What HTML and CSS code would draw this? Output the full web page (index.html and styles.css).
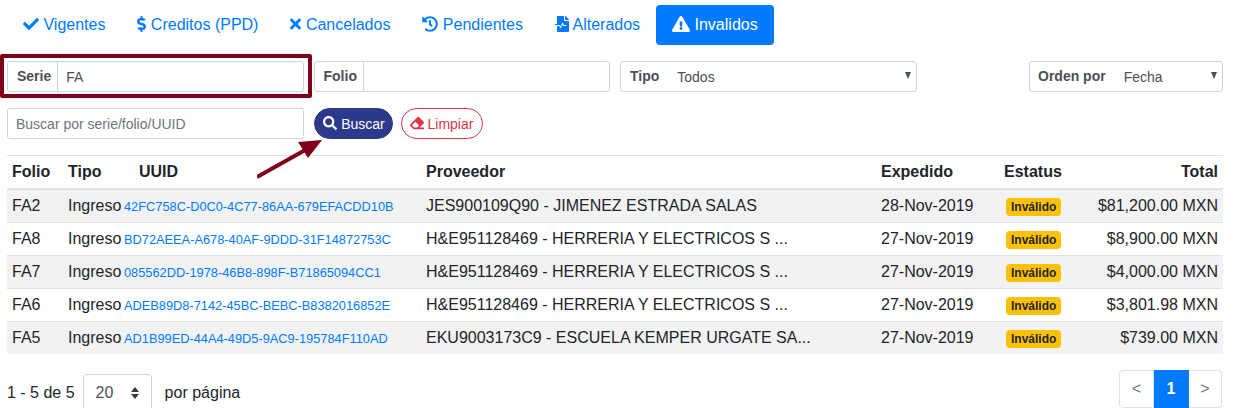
FILE: index.html
```html
<!DOCTYPE html>
<html lang="es">
<head>
 <meta charset="utf-8">
 <title>Invalidos</title>
 <link rel="stylesheet" href="styles.css">
</head>
<body>
<div class="page">
 <ul class="tabs">
  <li><a class="tab" href="#"><svg class="ico" viewBox="0 0 512 512"><path d="M173.898 439.404l-166.4-166.4c-9.997-9.997-9.997-26.206 0-36.204l36.203-36.204c9.997-9.998 26.207-9.998 36.204 0L192 312.69 432.095 72.596c9.997-9.997 26.207-9.997 36.204 0l36.203 36.204c9.997 9.997 9.997 26.206 0 36.204l-294.4 294.401c-9.998 9.997-26.207 9.997-36.204-.001z"/></svg> Vigentes</a></li>
  <li><a class="tab" href="#"><svg class="ico" viewBox="0 0 288 512"><path d="M209.2 233.4l-108-31.6C88.7 198.2 80 186.5 80 173.5c0-16.3 13.2-29.5 29.5-29.5h66.3c12.2 0 24.2 3.7 34.2 10.5 6.1 4.1 14.3 3.1 19.5-2l34.8-34c7.1-6.9 6.1-18.4-1.8-24.5C238 74.8 207.4 64.1 176 64V16c0-8.8-7.2-16-16-16h-32c-8.8 0-16 7.2-16 16v48h-2.5C45.8 64-5.4 118.7.5 183.6c4.2 46.1 39.4 83.6 83.8 96.6l102.5 30c12.5 3.7 21.2 15.3 21.2 28.3 0 16.3-13.2 29.5-29.5 29.5h-66.3C100 368 88 364.3 78 357.5c-6.1-4.1-14.3-3.1-19.5 2l-34.8 34c-7.1 6.9-6.1 18.4 1.8 24.5 24.5 19.2 55.1 29.9 86.5 30v48c0 8.8 7.2 16 16 16h32c8.8 0 16-7.2 16-16v-48.2c46.6-.9 90.3-28.6 105.7-72.7 21.5-61.6-14.6-124.8-72.5-141.7z"/></svg> Creditos (PPD)</a></li>
  <li><a class="tab" href="#"><svg class="ico" viewBox="0 0 352 512"><path d="M242.72 256l100.07-100.07c12.28-12.28 12.28-32.19 0-44.48l-22.24-22.24c-12.28-12.28-32.19-12.28-44.48 0L176 189.28 75.93 89.21c-12.28-12.28-32.19-12.28-44.48 0L9.21 111.45c-12.28 12.28-12.28 32.19 0 44.48L109.28 256 9.21 356.07c-12.28 12.28-12.28 32.19 0 44.48l22.24 22.24c12.28 12.28 32.2 12.28 44.48 0L176 322.72l100.07 100.07c12.28 12.28 32.2 12.28 44.48 0l22.24-22.24c12.28-12.28 12.28-32.19 0-44.48L242.72 256z"/></svg> Cancelados</a></li>
  <li><a class="tab" href="#"><svg class="ico" viewBox="0 0 512 512"><path d="M504 255.531c.253 136.64-111.18 248.372-247.82 248.468-59.015.042-113.223-20.53-155.822-54.911-11.077-8.94-11.905-25.541-1.839-35.607l11.267-11.267c8.609-8.609 22.353-9.551 31.891-1.984C173.062 425.135 212.781 440 256 440c101.705 0 184-82.311 184-184 0-101.705-82.311-184-184-184-48.814 0-93.149 18.969-126.068 49.932l50.754 50.754c10.08 10.08 2.941 27.314-11.313 27.314H24c-8.837 0-16-7.163-16-16V38.627c0-14.254 17.234-21.393 27.314-11.314l49.372 49.372C129.209 34.136 189.552 8 256 8c136.81 0 247.747 110.78 248 247.531zm-180.912 78.784l9.823-12.63c8.138-10.463 6.253-25.542-4.21-33.679L288 256.349V152c0-13.255-10.745-24-24-24h-16c-13.255 0-24 10.745-24 24v135.651l65.409 50.874c10.463 8.137 25.541 6.253 33.679-4.21z"/></svg> Pendientes</a></li>
  <li><a class="tab" href="#"><svg class="ico" viewBox="0 0 448 512"><path d="M288 136V0H88C74.7 0 64 10.7 64 24v232H8c-4.4 0-8 3.6-8 8v16c0 4.4 3.6 8 8 8h140.9c3 0 5.8 1.7 7.2 4.4l19.9 39.8 56.8-113.7c2.9-5.9 11.4-5.9 14.3 0l34.7 69.5H352c8.8 0 16 7.2 16 16s-7.2 16-16 16h-89.9L240 275.8l-56.8 113.7c-2.9 5.9-11.4 5.9-14.3 0L134.1 320H64v168c0 13.3 10.7 24 24 24h336c13.3 0 24-10.7 24-24V160H312c-13.2 0-24-10.8-24-24zm153-31L343.1 7c-4.5-4.5-10.6-7-17-7H320v128h128v-6.1c0-6.3-2.5-12.4-7-16.9z"/></svg> Alterados</a></li>
  <li><a class="tab active" href="#"><svg class="ico ico-wide" viewBox="0 0 576 512"><path d="M569.517 440.013C587.975 472.007 564.806 512 527.94 512H48.054c-36.937 0-59.999-40.055-41.577-71.987L246.423 24.035c18.467-32.009 64.72-31.951 83.154 0l239.94 416.078zM288 354c-25.405 0-46 20.595-46 46s20.595 46 46 46 46-20.595 46-46-20.595-46-46-46zm-43.673-165.346l7.418 136c.347 6.364 5.609 11.346 11.982 11.346h48.546c6.373 0 11.635-4.982 11.982-11.346l7.418-136c.375-6.874-5.098-12.654-11.982-12.654h-63.383c-6.884 0-12.356 5.78-11.981 12.654z"/></svg> Invalidos</a></li>
 </ul>

 <div class="filters">
  <div class="field field-serie">
   <label class="addon">Serie</label>
   <input class="control" value="FA">
   <div class="callout"></div>
  </div>
  <div class="field field-folio">
   <label class="addon">Folio</label>
   <input class="control">
  </div>
  <div class="field field-tipo">
   <label class="tag">Tipo</label>
   <div class="pick"><select class="control"><option>Todos</option></select></div>
  </div>
  <div class="field field-orden">
   <label class="tag">Orden por</label>
   <div class="pick"><select class="control"><option>Fecha</option></select></div>
  </div>
 </div>

 <div class="search">
  <input class="search-box" placeholder="Buscar por serie/folio/UUID">
  <button class="pill pill-go"><svg class="ico" viewBox="0 0 512 512"><path d="M505 442.7L405.3 343c-4.5-4.5-10.6-7-17-7H372c27.6-35.3 44-79.7 44-128C416 93.1 322.9 0 208 0S0 93.1 0 208s93.1 208 208 208c48.3 0 92.7-16.4 128-44v16.3c0 6.4 2.5 12.5 7 17l99.7 99.7c9.4 9.4 24.6 9.4 33.9 0l28.3-28.3c9.4-9.4 9.4-24.6.1-34zM208 336c-70.7 0-128-57.2-128-128 0-70.7 57.2-128 128-128 70.7 0 128 57.2 128 128 0 70.7-57.2 128-128 128z"/></svg> Buscar</button>
  <button class="pill pill-clear"><svg class="ico" viewBox="0 0 512 512"><path d="M497.941 273.941c18.745-18.745 18.745-49.137 0-67.882l-160-160c-18.745-18.745-49.136-18.746-67.883 0l-256 256c-18.745 18.745-18.745 49.137 0 67.882l96 96A48.004 48.004 0 0 0 144 480h356c6.627 0 12-5.373 12-12v-40c0-6.627-5.373-12-12-12H355.883l142.058-142.059zm-302.627-62.627l137.373 137.373L265.373 416H150.628l-80-80 124.686-124.686z"/></svg> Limpiar</button>
 </div>

 <svg class="arrow" viewBox="0 0 70 44"><path d="M0 39 L50 11" stroke="#7f0018" stroke-width="4" fill="none"/><path d="M65 2 L41 4 L51 20 Z" fill="#7f0018"/></svg>

 <table class="grid">
  <colgroup>
   <col class="c-folio"><col class="c-tipo"><col class="c-uuid"><col class="c-prov"><col class="c-exp"><col class="c-est"><col class="c-total">
  </colgroup>
  <thead>
   <tr><th>Folio</th><th>Tipo</th><th class="uuid-head">UUID</th><th>Proveedor</th><th>Expedido</th><th>Estatus</th><th class="num">Total</th></tr>
  </thead>
  <tbody>
   <tr><td>FA2</td><td>Ingreso</td><td><a class="uuid" href="#">42FC758C-D0C0-4C77-86AA-679EFACDD10B</a></td><td>JES900109Q90 - JIMENEZ ESTRADA SALAS</td><td>28-Nov-2019</td><td><span class="badge">Inválido</span></td><td class="num">$81,200.00 MXN</td></tr>
   <tr><td>FA8</td><td>Ingreso</td><td><a class="uuid" href="#">BD72AEEA-A678-40AF-9DDD-31F14872753C</a></td><td>H&amp;E951128469 - HERRERIA Y ELECTRICOS S ...</td><td>27-Nov-2019</td><td><span class="badge">Inválido</span></td><td class="num">$8,900.00 MXN</td></tr>
   <tr><td>FA7</td><td>Ingreso</td><td><a class="uuid" href="#">085562DD-1978-46B8-898F-B71865094CC1</a></td><td>H&amp;E951128469 - HERRERIA Y ELECTRICOS S ...</td><td>27-Nov-2019</td><td><span class="badge">Inválido</span></td><td class="num">$4,000.00 MXN</td></tr>
   <tr><td>FA6</td><td>Ingreso</td><td><a class="uuid" href="#">ADEB89D8-7142-45BC-BEBC-B8382016852E</a></td><td>H&amp;E951128469 - HERRERIA Y ELECTRICOS S ...</td><td>27-Nov-2019</td><td><span class="badge">Inválido</span></td><td class="num">$3,801.98 MXN</td></tr>
   <tr><td>FA5</td><td>Ingreso</td><td><a class="uuid" href="#">AD1B99ED-44A4-49D5-9AC9-195784F110AD</a></td><td>EKU9003173C9 - ESCUELA KEMPER URGATE SA...</td><td>27-Nov-2019</td><td><span class="badge">Inválido</span></td><td class="num">$739.00 MXN</td></tr>
  </tbody>
 </table>

 <div class="foot">
  <div class="count">
   <span>1 - 5 de 5</span>
   <div class="per"><select class="per-select"><option>20</option></select></div>
   <span>por página</span>
  </div>
  <ul class="pager">
   <li><a href="#">&lt;</a></li>
   <li><a class="current" href="#">1</a></li>
   <li><a href="#">&gt;</a></li>
  </ul>
 </div>
</div>
</body>
</html>
```

FILE: styles.css
```css
html, body {
 margin: 0;
 height: 408px;
 overflow: hidden;
 background: #fff;
}
body {
 font-family: "Liberation Sans", Arial, sans-serif;
 font-size: 16px;
 line-height: 24px;
 color: #212529;
}
a {
 text-decoration: none;
 color: #007bff;
}
.page {
 position: relative;
 width: 1216px;
 padding: 5px 10px 0 7px;
}
.ico {
 display: inline-block;
 height: 1em;
 width: auto;
 fill: currentColor;
 vertical-align: -0.125em;
}

/* tabs */
.tabs {
 display: flex;
 list-style: none;
 margin: 0 0 16px;
 padding: 0;
}
.tab {
 display: block;
 padding: 8px 16px;
 border-radius: 4px;
}
.tab.active {
 background: #007bff;
 color: #fff;
}

/* filters */
.filters {
 display: flex;
 gap: 10px;
 margin-bottom: 16px;
}
.field {
 position: relative;
 display: flex;
 box-sizing: border-box;
 width: 296.5px;
 height: 31px;
 border: 1px solid #ced4da;
 border-radius: 3px;
 font-size: 14px;
}
.field-orden {
 width: 194px;
 margin-left: auto;
}
.addon {
 padding: 0 6px 0 9px;
 border-right: 1px solid #ced4da;
 font-weight: bold;
 line-height: 29px;
 color: #495057;
}
.tag {
 padding: 0 0 0 9px;
 font-weight: bold;
 line-height: 29px;
 white-space: nowrap;
 color: #495057;
}
.field-orden .tag {
 padding-left: 8px;
}
.control {
 flex: 1;
 width: 100%;
 min-width: 0;
 box-sizing: border-box;
 height: 29px;
 border: 0;
 outline: 0;
 padding: 0 8px;
 background: transparent;
 font: inherit;
 color: #495057;
 appearance: none;
}
.pick {
 position: relative;
 flex: 1;
 padding-left: 10px;
}
.pick::after {
 content: "";
 position: absolute;
 right: 5px;
 top: 10px;
 border: 3.5px solid transparent;
 border-top: 7px solid #495057;
 border-bottom: 0;
}
.callout {
 position: absolute;
 top: -8px;
 left: -8px;
 right: -9px;
 bottom: -7px;
 border: 4px solid #7f0018;
 border-radius: 2px;
 pointer-events: none;
}

/* search */
.search {
 display: flex;
 align-items: center;
 height: 31px;
 margin-bottom: 16px;
}
.search-box {
 box-sizing: border-box;
 width: 296.5px;
 height: 31px;
 margin-right: 10px;
 padding: 0 8px;
 border: 1px solid #ced4da;
 border-radius: 3px;
 outline: 0;
 font: 14px "Liberation Sans", Arial, sans-serif;
}
.search-box::placeholder {
 color: #6c757d;
}
.pill {
 box-sizing: border-box;
 height: 31px;
 padding: 0;
 border: 1px solid;
 border-radius: 16px;
 font: 14px "Liberation Sans", Arial, sans-serif;
 white-space: nowrap;
}
.pill-go {
 width: 79px;
 margin-right: 8px;
 padding-left: 2px;
 background: #2c3a8c;
 border-color: #2c3a8c;
 color: #fff;
}
.pill-clear {
 width: 82px;
 background: #fff;
 border-color: #dc3545;
 color: #dc3545;
}

/* annotation arrow */
.arrow {
 position: absolute;
 left: 257px;
 top: 138px;
 width: 70px;
 height: 44px;
}

/* table */
.grid {
 width: 1216px;
 table-layout: fixed;
 border-collapse: separate;
 border-spacing: 0;
}
.c-folio { width: 56px; }
.c-tipo { width: 56px; }
.c-uuid { width: 302px; }
.c-prov { width: 455px; }
.c-exp { width: 123px; }
.c-est { width: 71px; }
.grid th,
.grid td {
 padding: 4px 5px;
 text-align: left;
 white-space: nowrap;
}
.grid th {
 border-top: 1px solid #dee2e6;
 border-bottom: 2px solid #dee2e6;
}
.grid th.uuid-head {
 padding-left: 20px;
}
.grid td {
 border-top: 1px solid #dee2e6;
}
.grid tbody tr:first-child td {
 border-top: 0;
}
.grid tbody tr:nth-child(odd) {
 background: #f2f2f2;
}
.grid .num {
 text-align: right;
}
.uuid {
 font-size: 12.8px;
 line-height: 1;
}
.badge {
 display: block;
 width: max-content;
 margin: 4px 0 2px 2px;
 padding: 0 5px;
 border-radius: 4px;
 background: #ffc107;
 font-size: 12px;
 font-weight: bold;
 line-height: 18px;
}

/* footer */
.foot {
 display: flex;
 justify-content: space-between;
 align-items: flex-start;
 margin-top: 16px;
}
.count {
 display: flex;
 align-items: center;
 gap: 8px;
 margin-top: 4px;
 height: 38px;
}
.per {
 position: relative;
 margin-right: 5px;
}
.per-select {
 display: block;
 box-sizing: border-box;
 width: 69px;
 height: 38px;
 padding: 0 12px;
 border: 1px solid #ced4da;
 border-radius: 4px;
 background: #fff;
 font: inherit;
 color: #495057;
 appearance: none;
}
.per::before,
.per::after {
 content: "";
 position: absolute;
 left: 48px;
 border: 4px solid transparent;
}
.per::before {
 top: 13px;
 border-top: 0;
 border-bottom: 5px solid #343a40;
}
.per::after {
 top: 20px;
 border-bottom: 0;
 border-top: 5px solid #343a40;
}
.pager {
 display: flex;
 list-style: none;
 margin: 0 1px 0 0;
 padding: 0;
}
.pager a {
 display: block;
 box-sizing: border-box;
 width: 35px;
 height: 38px;
 border: 1px solid #dee2e6;
 border-left: 0;
 line-height: 36px;
 text-align: center;
 color: #6c757d;
}
.pager li:first-child a {
 border-left: 1px solid #dee2e6;
 border-radius: 4px 0 0 4px;
}
.pager li:last-child a {
 width: 33px;
 border-radius: 0 4px 4px 0;
}
.pager a.current {
 background: #007bff;
 border-color: #007bff;
 color: #fff;
 font-weight: bold;
}
```
